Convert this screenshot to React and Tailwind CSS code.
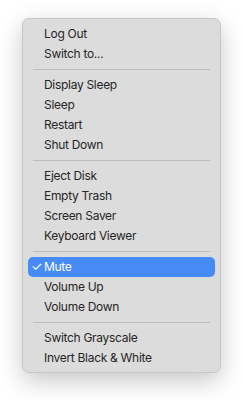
import React from "react";

const groups = [
  ["Log Out", "Switch to..."],
  ["Display Sleep", "Sleep", "Restart", "Shut Down"],
  ["Eject Disk", "Empty Trash", "Screen Saver", "Keyboard Viewer"],
  ["Mute", "Volume Up", "Volume Down"],
  ["Switch Grayscale", "Invert Black & White"],
];

function Item({ label }) {
  const active = label === "Mute";
  return (
    <div
      className={
        "relative mx-[5px] flex h-5 items-center rounded-[5px] pl-[16px] " +
        (active ? "bg-[#478bf7] text-white" : "text-[#262626]")
      }
    >
      {active && (
        <span className="absolute left-[3px] top-0 flex h-5 items-center text-[13px]">✓</span>
      )}
      <span>{label}</span>
    </div>
  );
}

export default function App() {
  return (
    <div
      className="h-[400px] w-[244px] bg-white pl-[22px] pt-[18px]"
      style={{ fontFamily: "Inter, 'Liberation Sans', sans-serif" }}
    >
      <div className="w-[199px] rounded-[7px] border border-[#c6c6c6] bg-[#dcdcdc] pb-[4px] pt-[5px] text-[12px] tracking-[-0.3px] shadow-[0_8px_24px_rgba(0,0,0,0.22)]">
        {groups.map((g, i) => (
          <div key={i}>
            {i > 0 && (
              <div className="py-[5px]">
                <div className="mx-[10px] h-px bg-[#bdbdbd]" />
              </div>
            )}
            {g.map((l) => (
              <Item key={l} label={l} />
            ))}
          </div>
        ))}
      </div>
    </div>
  );
}
